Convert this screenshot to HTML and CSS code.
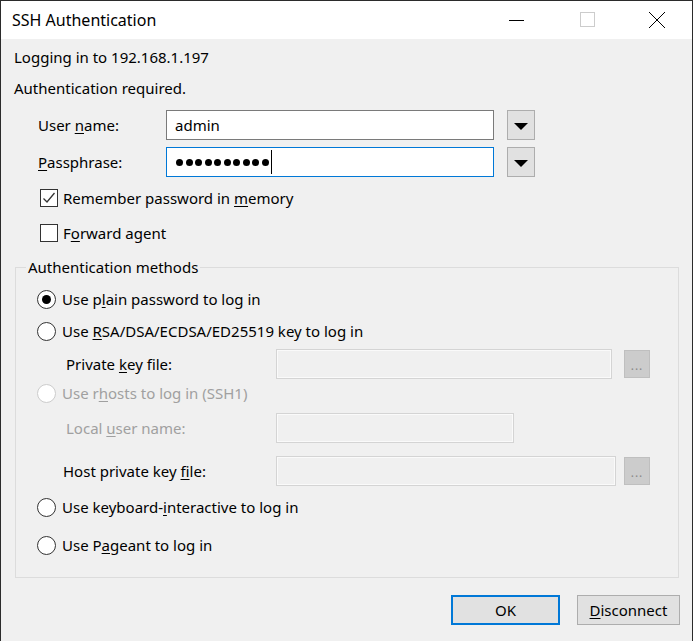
FILE: index.html
```html
<!DOCTYPE html>
<html lang="en">

<head>
  <meta charset="UTF-8">
  <meta name="viewport" content="width=device-width, initial-scale=1.0">
  <title>SSH Authentication</title>
  <link rel="stylesheet" href="styles.css">
</head>

<body>

  <div class="window">

    <!-- title bar -->
    <div class="titlebar">
      <span class="title">SSH Authentication</span>
      <div class="caption-buttons">
        <span class="caption-btn">
          <svg width="16" height="16" viewBox="0 0 16 16"><path d="M0 8.5h15" stroke="#000" stroke-width="1" /></svg>
        </span>
        <span class="caption-btn">
          <svg width="16" height="16" viewBox="0 0 16 16"><rect x="1.5" y="0.5" width="14" height="14" fill="none" stroke="#ccc" /></svg>
        </span>
        <span class="caption-btn">
          <svg width="18" height="18" viewBox="0 0 18 18"><path d="M1 1l16 16M17 1L1 17" stroke="#000" stroke-width="1" /></svg>
        </span>
      </div>
    </div>

    <div class="content">
      <div class="row info first-info">Logging in to 192.168.1.197</div>
      <div class="row info second-info">Authentication required.</div>

      <div class="row field-row user-row">
        <span class="field-label">User <u>n</u>ame:</span>
        <div class="textbox">admin</div>
        <span class="drop-btn">
          <svg width="14" height="8" viewBox="0 0 14 8"><polygon points="0,0 14,0 7,7" fill="#000" /></svg>
        </span>
      </div>

      <div class="row field-row pass-row">
        <span class="field-label"><u>P</u>assphrase:</span>
        <div class="textbox focused">
          <span class="dots">
            <i></i><i></i><i></i><i></i><i></i><i></i><i></i><i></i><i></i><i></i>
          </span>
          <span class="caret"></span>
        </div>
        <span class="drop-btn">
          <svg width="14" height="8" viewBox="0 0 14 8"><polygon points="0,0 14,0 7,7" fill="#000" /></svg>
        </span>
      </div>

      <div class="row check-row remember-row">
        <span class="checkbox">
          <svg width="16" height="16" viewBox="0 0 16 16"><path d="M2.5 8.5l3.5 3.5 7.5-9" fill="none" stroke="#333" stroke-width="1.3" /></svg>
        </span>
        <span>Remember password in <u>m</u>emory</span>
      </div>

      <div class="row check-row forward-row">
        <span class="checkbox"></span>
        <span>F<u>o</u>rward agent</span>
      </div>

      <fieldset class="group">
        <legend>Authentication methods</legend>

        <div class="row radio-row r-plain">
          <span class="radio checked"></span>
          <span>Use p<u>l</u>ain password to log in</span>
        </div>

        <div class="row radio-row r-rsa">
          <span class="radio"></span>
          <span>Use <u>R</u>SA/DSA/ECDSA/ED25519 key to log in</span>
        </div>

        <div class="row sub-row r-keyfile">
          <span class="sub-label">Private <u>k</u>ey file:</span>
          <div class="textbox disabled keyfile-box"></div>
          <span class="browse-btn">...</span>
        </div>

        <div class="row radio-row disabled-text r-rhosts">
          <span class="radio disabled"></span>
          <span>Use r<u>h</u>osts to log in (SSH1)</span>
        </div>

        <div class="row sub-row disabled-text r-local">
          <span class="sub-label">Local <u>u</u>ser name:</span>
          <div class="textbox disabled local-box"></div>
        </div>

        <div class="row sub-row r-host">
          <span class="sub-label host-label">Host private key <u>f</u>ile:</span>
          <div class="textbox disabled host-box"></div>
          <span class="browse-btn">...</span>
        </div>

        <div class="row radio-row r-kbd">
          <span class="radio"></span>
          <span>Use keyboard-<u>i</u>nteractive to log in</span>
        </div>

        <div class="row radio-row r-pageant">
          <span class="radio"></span>
          <span>Use P<u>a</u>geant to log in</span>
        </div>
      </fieldset>

      <div class="button-row">
        <span class="push-btn default">OK</span>
        <span class="push-btn disconnect"><u>D</u>isconnect</span>
      </div>
    </div>

  </div>

</body>

</html>
```

FILE: styles.css
```css
:root {
  --face: #f0f0f0;
  --text: #000000;
  --disabled-text: #a0a0a0;
  --accent: #0078d7;
  --font: "Noto Sans", "Liberation Sans", sans-serif;
}

html,
body {
  margin: 0;
  padding: 0;
  background: var(--face);
  font-family: var(--font);
  font-size: 15px;
  color: var(--text);
}

.window {
  width: 693px;
  height: 641px;
  box-sizing: border-box;
  border: 1px solid #2b2b2b;
  border-bottom: none;
  background: var(--face);
  overflow: hidden;
}

/* title bar */

.titlebar {
  height: 38px;
  background: #ffffff;
  display: flex;
  align-items: center;
  justify-content: space-between;
}

.title {
  font-size: 16px;
  padding-left: 11px;
  padding-bottom: 1px;
}

.caption-buttons {
  display: flex;
  height: 100%;
}

.caption-btn {
  width: 70px;
  height: 100%;
  display: flex;
  align-items: center;
  justify-content: center;
}

.caption-btn svg {
  display: block;
}

/* dialog body */

.content {
  padding: 3px 12px 0 13px;
}

.row {
  height: 30px;
  display: flex;
  align-items: center;
  white-space: nowrap;
}

u {
  text-underline-offset: 2px;
}

.second-info {
  margin-top: 1px;
}

.field-row {
  padding-left: 24px;
}

.user-row {
  margin-top: 7px;
}

.pass-row {
  margin-top: 7px;
}

.field-label {
  width: 128px;
}

.textbox {
  width: 328px;
  height: 30px;
  box-sizing: border-box;
  border: 1px solid #7a7a7a;
  background: #ffffff;
  display: flex;
  align-items: center;
  padding-left: 8px;
}

.textbox.focused {
  border-color: var(--accent);
}

.dots {
  display: flex;
  gap: 2.5px;
  padding-left: 1px;
}

.dots i {
  width: 7px;
  height: 7px;
  border-radius: 50%;
  background: #000;
}

.caret {
  width: 1px;
  height: 24px;
  background: #000;
  margin-left: 2px;
}

.drop-btn {
  width: 28px;
  height: 30px;
  margin-left: 13px;
  box-sizing: border-box;
  border: 1px solid #adadad;
  background: #e1e1e1;
  display: flex;
  align-items: center;
  justify-content: center;
  padding-top: 3px;
}

.drop-btn svg {
  display: block;
}

/* checkboxes */

.check-row {
  padding-left: 26px;
}

.remember-row {
  margin-top: 6px;
}

.forward-row {
  margin-top: 5px;
}

.checkbox {
  width: 18px;
  height: 18px;
  box-sizing: border-box;
  border: 1px solid #333;
  background: #ffffff;
  margin-right: 5px;
  display: flex;
  align-items: center;
  justify-content: center;
}

/* group box */

.group {
  margin: 9px 1px 0 1px;
  padding: 0 0 17px 0;
  border: 1px solid #dcdcdc;
  min-width: 0;
}

.group legend {
  margin-left: 10px;
  padding: 0 2px;
  line-height: 20px;
}

.radio-row {
  padding-left: 21px;
}

.r-plain {
  margin-top: 7px;
}

.r-rsa {
  margin-top: 2px;
}

.r-keyfile {
  margin-top: 3px;
}

.r-rhosts {
  height: 28px;
}

.r-local {
  margin-top: 6px;
}

.r-host {
  margin-top: 13px;
}

.r-kbd {
  margin-top: 6px;
}

.r-pageant {
  margin-top: 8px;
}

.radio {
  width: 19px;
  height: 19px;
  box-sizing: border-box;
  border: 1px solid #333;
  border-radius: 50%;
  background: #ffffff;
  margin-right: 6px;
  display: flex;
  align-items: center;
  justify-content: center;
}

.radio.checked::after {
  content: "";
  width: 9px;
  height: 9px;
  border-radius: 50%;
  background: #000;
}

.radio.disabled {
  border-color: #cccccc;
}

.disabled-text {
  color: var(--disabled-text);
}

.sub-row {
  padding-left: 50px;
}

.sub-label {
  width: 210px;
}

.r-host {
  padding-left: 47px;
}

.host-label {
  width: 213px;
}

.textbox.disabled {
  background: var(--face);
  border-color: #d4d4d4;
  box-shadow: inset 0 0 0 1px #fafafa;
}

.keyfile-box {
  width: 336px;
}

.local-box {
  width: 238px;
}

.host-box {
  width: 340px;
}

.browse-btn {
  width: 26px;
  height: 28px;
  margin-left: 12px;
  box-sizing: border-box;
  border: 1px solid #bfbfbf;
  background: #cccccc;
  color: #8a8a8a;
  font-size: 12px;
  letter-spacing: 1px;
  display: flex;
  align-items: flex-end;
  justify-content: center;
  padding-bottom: 5px;
  line-height: 1;
}

.host-box + .browse-btn {
  margin-left: 8px;
}

/* buttons */

.button-row {
  margin-top: 17px;
  display: flex;
  justify-content: flex-end;
  gap: 17px;
}

.push-btn {
  height: 30px;
  box-sizing: border-box;
  border: 1px solid #adadad;
  background: #e1e1e1;
  display: flex;
  align-items: center;
  justify-content: center;
}

.push-btn.default {
  width: 109px;
  border: 2px solid var(--accent);
}

.push-btn.disconnect {
  width: 103px;
}
```
